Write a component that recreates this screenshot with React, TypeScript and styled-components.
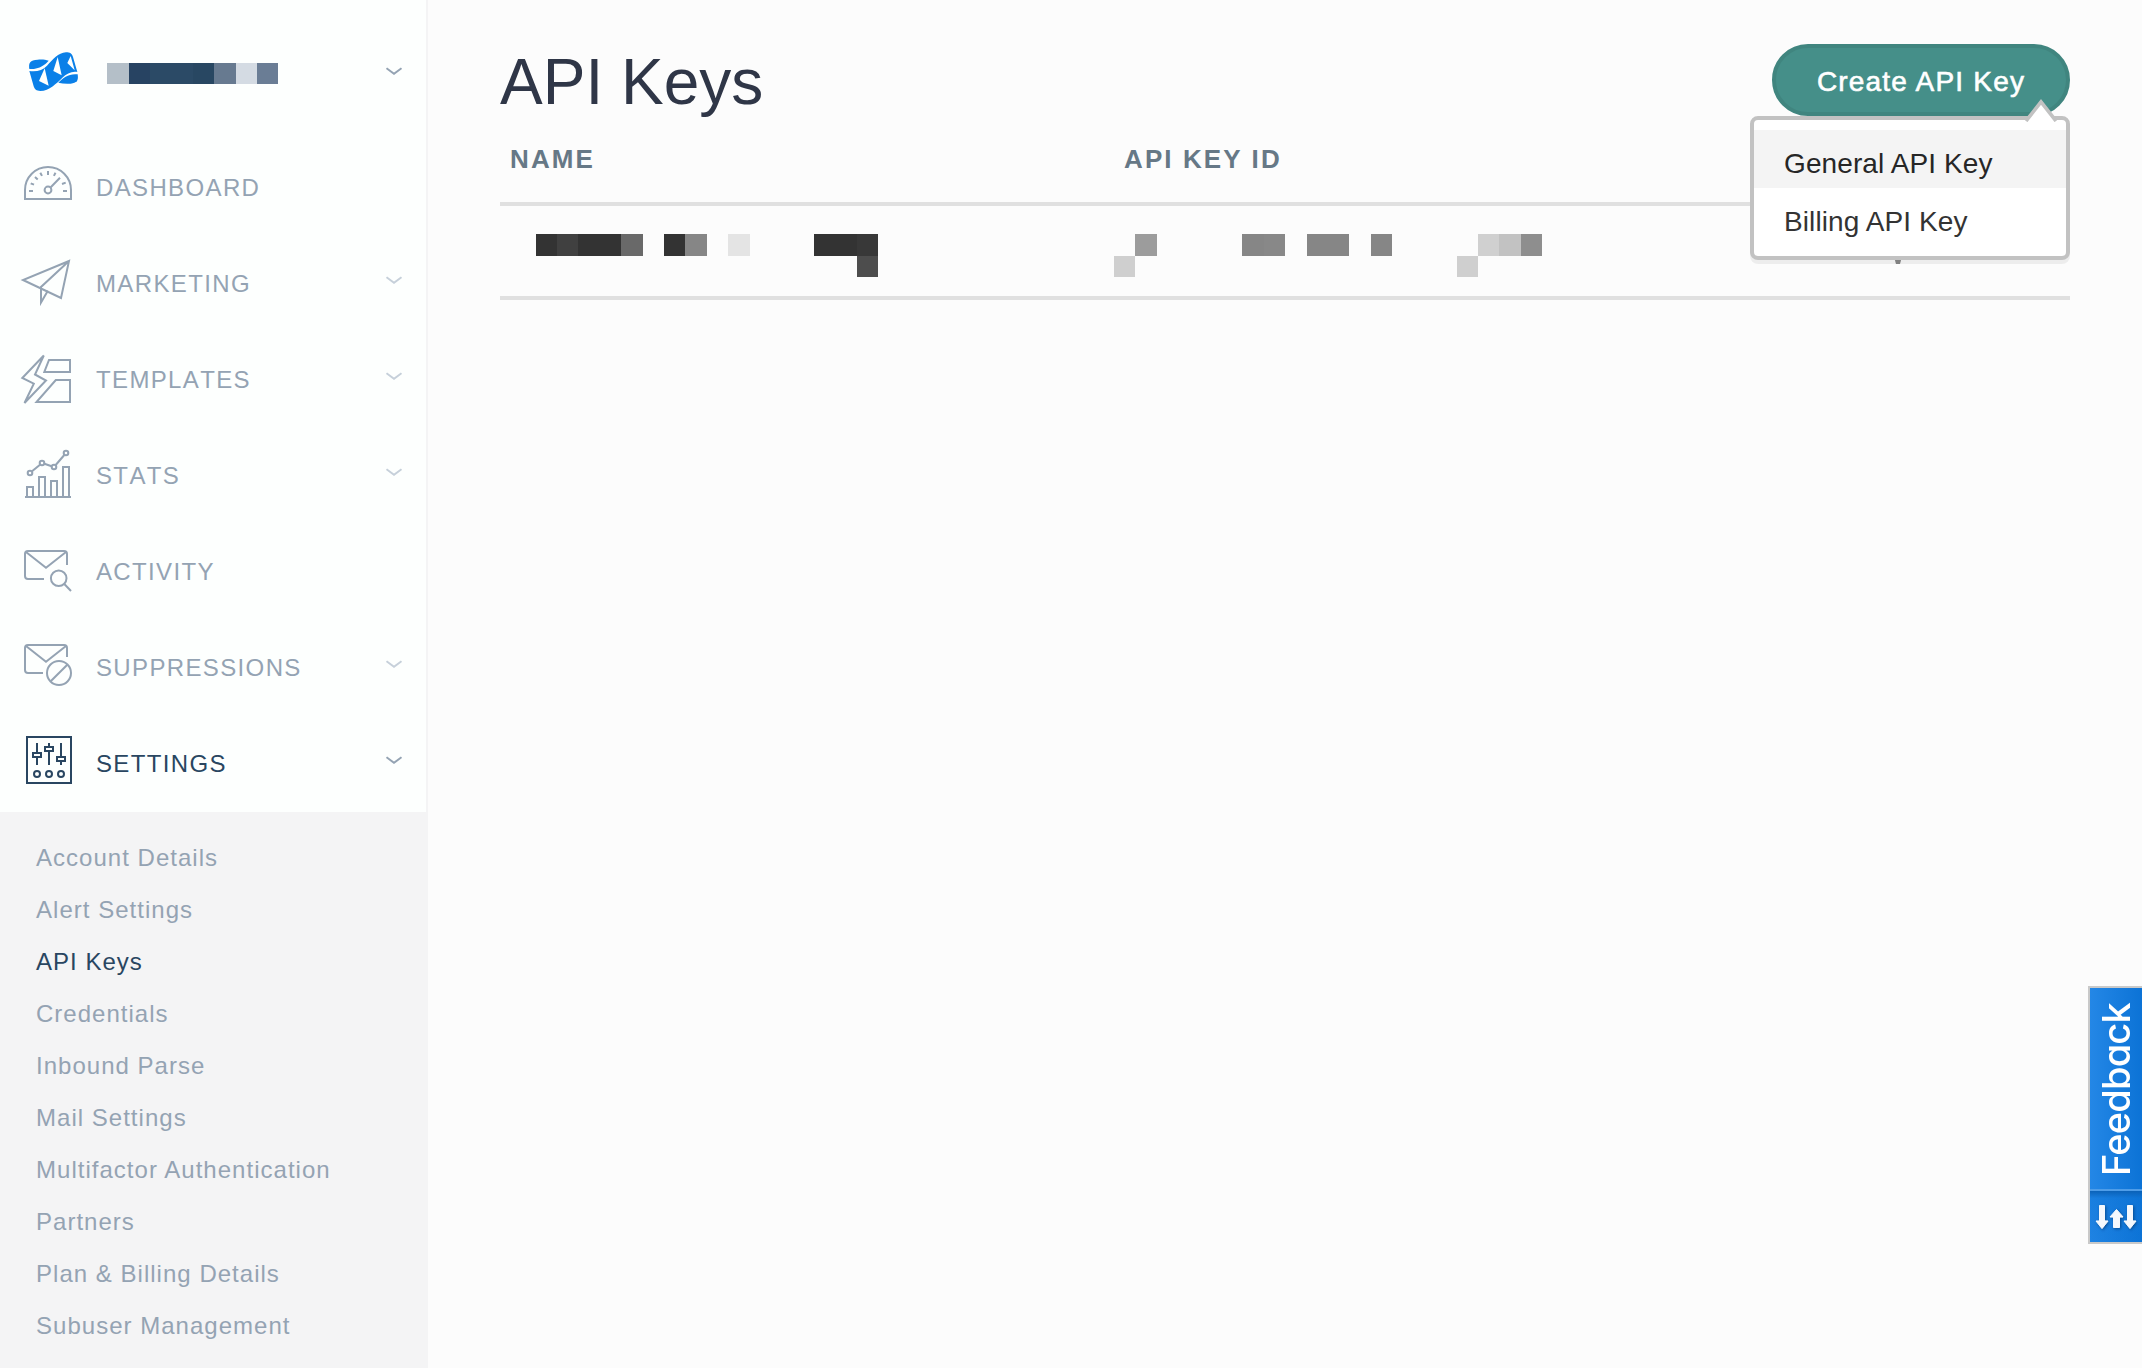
import React from 'react';
import styled, { createGlobalStyle, css } from 'styled-components';

const GlobalStyle = createGlobalStyle`
  *, *::before, *::after { box-sizing: border-box; }
  html, body { margin: 0; padding: 0; background: #fcfcfc; }
  body {
    font-family: "Liberation Sans", Arial, Helvetica, sans-serif;
    -webkit-font-smoothing: antialiased;
    overflow: hidden;
  }
  ul { list-style: none; margin: 0; padding: 0; }
`;

const muted = '#94a3b3';
const navy = '#294661';

const Page = styled.div`
  display: flex;
  width: 100%;
  height: 1368px;
`;

const Sidebar = styled.aside`
  display: flex;
  flex-direction: column;
  flex: 0 0 428px;
  background: #fdfffe;
  border-right: 2px solid #f4f4f5;
`;

const Account = styled.div`
  display: flex;
  align-items: flex-start;
  height: 140px;
  padding: 51px 24px 0 28px;
`;

const AccountName = styled.div`
  margin: 12px auto 0 27px;
`;

const AccountChevron = styled.div`
  display: flex;
  margin-top: 15px;
`;

const NavItem = styled.li<{ $active?: boolean }>`
  display: flex;
  align-items: center;
  height: 96px;
  padding: 0 24px 0 20px;
  color: ${(p) => (p.$active ? navy : muted)};
`;

const NavIcon = styled.svg`
  flex: none;
  width: 56px;
  height: 56px;
  fill: none;
  stroke: currentColor;
  stroke-width: 2;
`;

const NavLabel = styled.span`
  flex: 1;
  margin-left: 20px;
  font-size: 24px;
  line-height: 96px;
  font-kerning: none;
  letter-spacing: 1.36px;
`;

const ChevronSvg = styled.svg<{ $strong?: boolean; $lift?: boolean }>`
  width: 16px;
  height: 10px;
  fill: none;
  stroke: ${(p) => (p.$strong ? muted : '#c6d0da')};
  stroke-width: 2;
  ${(p) => p.$lift && css`margin-bottom: 9px;`}
`;

const SubMenu = styled.ul`
  flex: 1;
  margin-right: -2px;
  && { padding: 20px 0 0 36px; }
  background: #f4f4f5;
`;

const SubItem = styled.li<{ $active?: boolean }>`
  font-size: 24px;
  line-height: 52px;
  letter-spacing: 1.02px;
  color: ${(p) => (p.$active ? navy : muted)};
`;

const Main = styled.main`
  flex: 1;
  padding: 44px 72px 0 72px;
`;

const PageHeader = styled.header`
  display: flex;
  justify-content: space-between;
  height: 72px;
`;

const Title = styled.h1`
  margin: 2px 0 0;
  font-size: 64px;
  font-weight: 400;
  line-height: 72px;
  color: #2f3647;
`;

const CreateWrap = styled.div`
  position: relative;
`;

const CreateButton = styled.button`
  display: block;
  width: 298px;
  height: 72px;
  padding: 4px 0 0;
  border: 4px solid #40857f;
  border-radius: 36px;
  background: #458f89;
  color: #fff;
  font-family: inherit;
  font-size: 28px;
  line-height: 32px;
  letter-spacing: 1.2px;
  -webkit-text-stroke: 0.6px #fff;
`;

const Menu = styled.ul`
  position: absolute;
  z-index: 2;
  top: 72px;
  right: 0;
  width: 320px;
  height: 144px;
  && { padding: 10px 0; }
  border: 4px solid #c2c2c2;
  border-radius: 8px;
  background: #fff;
  box-shadow: 0 4px 0 rgba(0, 0, 0, 0.06);
`;

const MenuItem = styled.li<{ $hover?: boolean }>`
  height: 58px;
  padding: 6px 0 0 30px;
  font-size: 28px;
  line-height: 56px;
  letter-spacing: 0.1px;
  color: ${(p) => (p.$hover ? '#262626' : '#333')};
  background: ${(p) => (p.$hover ? '#f4f4f4' : 'transparent')};
`;

const MenuArrow = styled.svg`
  position: absolute;
  top: -24px;
  right: 9px;
  width: 32px;
  height: 26px;
`;

const HeadRow = styled.div`
  display: grid;
  grid-template-columns: 614px 1fr;
  height: 90px;
  padding: 28px 10px 0;
  border-bottom: 4px solid #e0e0e0;
`;

const HeadCell = styled.div`
  font-size: 26px;
  font-weight: 700;
  line-height: 30px;
  letter-spacing: 2.1px;
  color: #667886;
`;

const BodyRow = styled.div`
  display: grid;
  grid-template-columns: 578px 784px 1fr;
  height: 94px;
  padding: 28px 0 0 36px;
  border-bottom: 4px solid #e0e0e0;
`;

const ActionCell = styled.div`
  display: flex;
  align-items: flex-start;
  padding-top: 19px;
`;

const ActionCaret = styled.div`
  width: 10px;
  height: 11px;
  margin-left: -5px;
  background: #8a8a8a;
  clip-path: polygon(0 0, 100% 0, 70% 100%, 30% 100%);
`;

const Strip = styled.div<{ $h: number }>`
  display: flex;
  height: ${(p) => p.$h}px;
`;

const Block = styled.span<{ $w: number; $c: string }>`
  flex: none;
  width: ${(p) => p.$w}px;
  background: ${(p) => p.$c};
`;

const FeedbackTab = styled.div`
  position: fixed;
  right: 0;
  top: 986px;
  display: flex;
  flex-direction: column;
  width: 54px;
  height: 258px;
  border: 2px solid #c9c9c9;
  border-right: 0;
  background: linear-gradient(90deg, #2487e6, #0c73d6);
`;

const FeedbackText = styled.div`
  display: flex;
  align-items: center;
  justify-content: flex-end;
  height: 201px;
  width: 52px;
  padding: 0 0 15px;
  writing-mode: vertical-rl;
  transform: rotate(180deg);
  font-family: Inter, "Open Sans", sans-serif;
  font-feature-settings: "cv11", "ss03";
  font-size: 38px;
  font-weight: 500;
  line-height: 52px;
  letter-spacing: -0.8px;
  color: #fff;
`;

const FeedbackFoot = styled.div`
  flex: 1;
  padding-top: 2px;
  border-top: 2px solid #4f9de8;
  background: linear-gradient(180deg, #0b62b8, rgba(12, 115, 214, 0.4) 14%, rgba(12, 115, 214, 0.2));
`;

type Cell = [number, string];

const none = 'transparent';

const accountCells: Cell[] = [
  [22, '#b4bfc8'], [21, '#274362'], [43, '#2b4a66'], [21, '#284762'],
  [22, '#677a90'], [21, '#d4dbe3'], [21, '#6a7d95'],
];

const nameCells: Cell[][] = [
  [
    [21, '#333'], [21, '#404040'], [43, '#333'], [22, '#696969'], [21, none],
    [21, '#333'], [22, '#868686'], [21, none], [22, '#e4e4e4'], [64, none],
    [43, '#333'], [21, '#383838'],
  ],
  [[321, none], [21, '#4d4d4d']],
];

const idCells: Cell[][] = [
  [
    [21, none], [22, '#9c9c9c'], [85, none], [22, '#868686'], [21, '#888'],
    [22, none], [42, '#868686'], [22, none], [21, '#868686'], [86, none],
    [21, '#d0d0d0'], [22, '#c2c2c2'], [21, '#8e8e8e'],
  ],
  [[21, '#cfcfcf'], [322, none], [21, '#cfcfcf']],
];

function Mosaic({ rows }: { rows: Cell[][] }) {
  return (
    <div>
      {rows.map((cells, r) => (
        <Strip key={r} $h={r === 0 ? 22 : 21}>
          {cells.map(([w, c], i) => <Block key={i} $w={w} $c={c} />)}
        </Strip>
      ))}
    </div>
  );
}

function Chevron({ strong, lift }: { strong?: boolean; lift?: boolean }) {
  return (
    <ChevronSvg viewBox="0 0 16 10" $strong={strong} $lift={lift}>
      <path d="M0.500 2.200 8 7.800 15.500 2.200" />
    </ChevronSvg>
  );
}

function Logo() {
  return (
    <svg width="52" height="42" viewBox="84 93 156 126">
      <g fill="#0a80e8">
        <path d="M88 147C85 128 90 121 113 119C126 118 137 119 146 122C135 134 120 148 88 147Z" />
        <path d="M88 153C110 156 128 151 141 137C159 119 174 98 198 97C210 97 216 101 219 111L232 156C215 153 200 161 187 173C170 190 148 212 121 213C109 213 104 208 101 199Z" />
        <path d="M175 188C190 172 207 160 233 163C236 183 230 189 212 191C198 192 186 191 175 188Z" />
      </g>
      <g fill="#fdfffe">
        <path d="M134 145 117 183 146 197Z" />
        <path d="M173 111 160 153 185 166Z" />
        <path d="M212 108 202 129 224 151Z" />
      </g>
    </svg>
  );
}

const icons: Record<string, React.ReactNode> = {
  dashboard: (
    <>
      <path d="M25 59V50a23 23 0 0 1 46 0V59Z" />
      <circle cx="48" cy="50" r="3.4" />
      <path d="M50.5 47.5 60 37.8M29 51h4M63 51h4M48 31v4M30.7 43.3l3.3 1.4M35 37l2.7 2.5M40.3 32.7l1.7 3.2M55.5 32.7l-1.6 3.2M62 44l3.7-1.4" />
    </>
  ),
  marketing: <path d="M69 25 23 44 61 62ZM69 25 41 51V66.5L48 54.5" />,
  templates: (
    <>
      <path d="M43.8 23.5 22.3 46 33.8 51.7 24.5 71 46 48.5 35 42.5Z" />
      <path d="M49 28H70V40H44.3ZM55.8 48H70V70H36.5Z" />
    </>
  ),
  stats: (
    <>
      <path d="M25 69H71M27 69V59h6V69M39 69V49h6V69M51 69V53h6V69M63 69V39h6V69" />
      <path d="M32 43.3 40 36.7M44.4 35.8l7.2 2.4M55.7 37 64.3 27" />
      <circle cx="30" cy="45" r="2.3" />
      <circle cx="42" cy="35" r="2.3" />
      <circle cx="54" cy="39" r="2.3" />
      <circle cx="66" cy="25" r="2.3" />
    </>
  ),
  activity: (
    <>
      <path d="M67 41V30a3 3 0 0 0-3-3H28a3 3 0 0 0-3 3V52a3 3 0 0 0 3 3H44" />
      <path d="M26 28 46 43.7 66 28" />
      <circle cx="58.7" cy="54.3" r="7.8" />
      <path d="M64.3 60 71 67" />
    </>
  ),
  suppressions: (
    <>
      <path d="M67 37V28a3 3 0 0 0-3-3H28a3 3 0 0 0-3 3V50a3 3 0 0 0 3 3H43" />
      <path d="M26 26 46 41.7 66 26" />
      <circle cx="59" cy="53" r="12" />
      <path d="M50.7 61.3 67.3 44.7" />
    </>
  ),
  settings: (
    <>
      <rect x="27" y="21" width="44" height="46" />
      <path d="M37 27V37M37 41V49M49 27V31M49 35V49M61 27V41M61 45V49" />
      <rect x="33" y="37" width="8" height="4" />
      <rect x="45" y="31" width="8" height="4" />
      <rect x="57" y="41" width="8" height="4" />
      <circle cx="37" cy="58" r="3" />
      <circle cx="49" cy="58" r="3" />
      <circle cx="61" cy="58" r="3" />
    </>
  ),
};

const nav = [
  { id: 'dashboard', label: 'DASHBOARD', expands: false },
  { id: 'marketing', label: 'MARKETING', expands: true },
  { id: 'templates', label: 'TEMPLATES', expands: true },
  { id: 'stats', label: 'STATS', expands: true },
  { id: 'activity', label: 'ACTIVITY', expands: false },
  { id: 'suppressions', label: 'SUPPRESSIONS', expands: true },
  { id: 'settings', label: 'SETTINGS', expands: true },
];

const settingsLinks = [
  'Account Details', 'Alert Settings', 'API Keys', 'Credentials', 'Inbound Parse',
  'Mail Settings', 'Multifactor Authentication', 'Partners',
  'Plan & Billing Details', 'Subuser Management',
];

function FeedbackArrows() {
  return (
    <svg width="52" height="44" viewBox="0 0 52 44">
      <defs>
        <filter id="arrowShadow" x="-30%" y="-30%" width="160%" height="160%">
          <feDropShadow dx="1" dy="1" stdDeviation="1.8" floodColor="#063f7d" floodOpacity="0.8" />
        </filter>
      </defs>
      <g fill="#f4f8fd" stroke="#f4f8fd" strokeWidth="1" strokeLinejoin="round" filter="url(#arrowShadow)">
        <path d="M9.5 12.500h5v15.500h3.5L12 35.500 6 28h3.500Z" />
        <path d="M23.500 34.500h6V24h3.500L26.500 16.500 20 24h3.500Z" />
        <path d="M37.500 12.500h5v15.500h3.500L40 35.500 34 28h3.500Z" />
      </g>
    </svg>
  );
}

export default function App() {
  return (
    <>
      <GlobalStyle />
      <Page>
        <Sidebar>
          <Account>
            <Logo />
            <AccountName><Strip $h={21}>{accountCells.map(([w, c], i) => <Block key={i} $w={w} $c={c} />)}</Strip></AccountName>
            <AccountChevron><Chevron strong /></AccountChevron>
          </Account>
          <nav>
            <ul>
              {nav.map((n) => {
                const active = n.id === 'settings';
                return (
                  <NavItem key={n.id} $active={active}>
                    <NavIcon viewBox="20 20 56 56">{icons[n.id]}</NavIcon>
                    <NavLabel>{n.label}</NavLabel>
                    {n.expands && <Chevron strong={active} lift />}
                  </NavItem>
                );
              })}
            </ul>
          </nav>
          <SubMenu>
            {settingsLinks.map((s) => <SubItem key={s} $active={s === 'API Keys'}>{s}</SubItem>)}
          </SubMenu>
        </Sidebar>
        <Main>
          <PageHeader>
            <Title>API Keys</Title>
            <CreateWrap>
              <CreateButton>Create API Key</CreateButton>
              <Menu>
                <MenuArrow viewBox="0 0 32 26">
                  <path d="M0 26 16 4 32 26Z" fill="#fff" />
                  <path d="M1 25 16 6 31 25" fill="#fff" stroke="#c2c2c2" strokeWidth="3.600" />
                </MenuArrow>
                <MenuItem $hover>General API Key</MenuItem>
                <MenuItem>Billing API Key</MenuItem>
              </Menu>
            </CreateWrap>
          </PageHeader>
          <HeadRow>
            <HeadCell>NAME</HeadCell>
            <HeadCell>API KEY ID</HeadCell>
          </HeadRow>
          <BodyRow>
            <Mosaic rows={nameCells} />
            <Mosaic rows={idCells} />
            <ActionCell><ActionCaret /></ActionCell>
          </BodyRow>
        </Main>
      </Page>
      <FeedbackTab>
        <FeedbackText>Feedback</FeedbackText>
        <FeedbackFoot><FeedbackArrows /></FeedbackFoot>
      </FeedbackTab>
    </>
  );
}
